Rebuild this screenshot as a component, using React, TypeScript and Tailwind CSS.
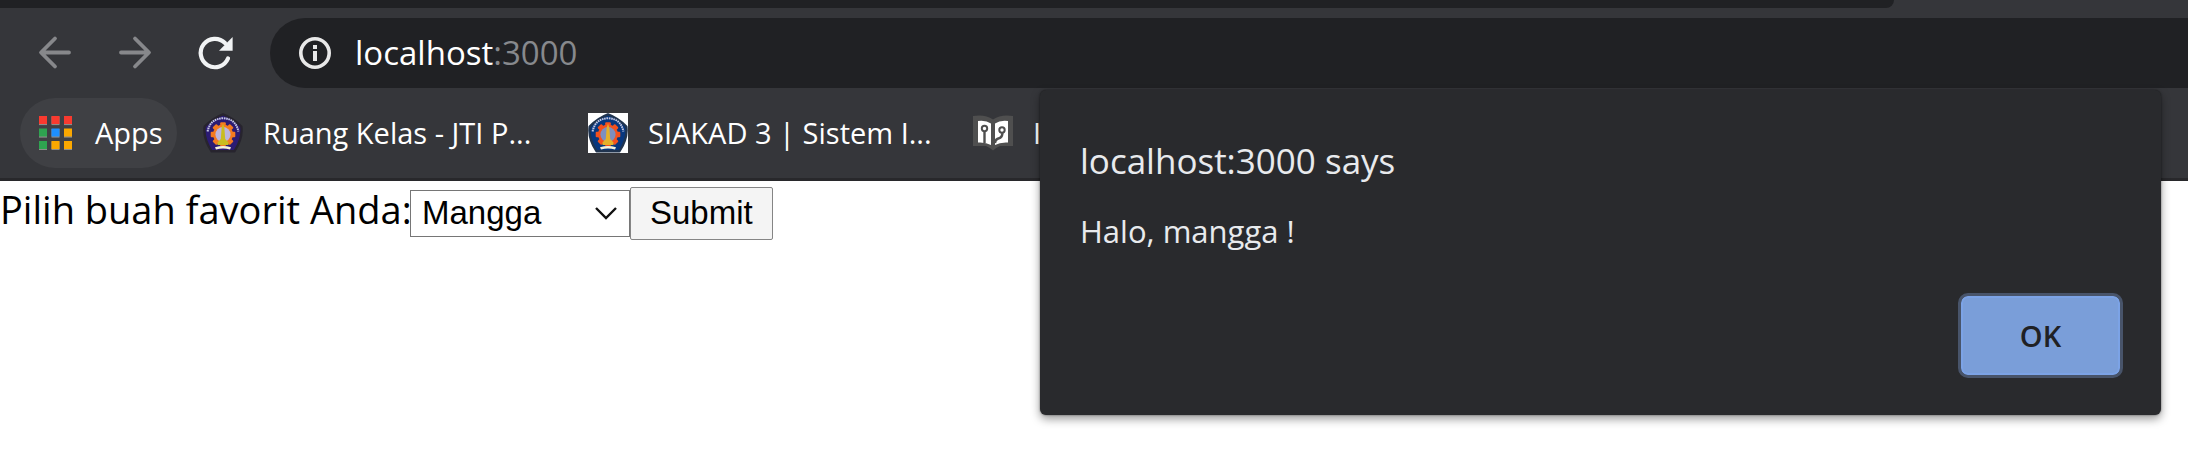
import { useState } from 'react';

const dots = [
  ['#f93a2f', '#f93a2f', '#f93a2f'],
  ['#2ea350', '#1e90ff', '#fba800'],
  ['#2ea350', '#fba800', '#fba800'],
];

function AppsIcon() {
  return (
    <svg width="34" height="34" viewBox="0 0 34 34" aria-hidden="true">
      {dots.map((row, r) =>
        row.map((fill, c) => (
          <g key={`${r}-${c}`}>
            <rect x={c * 12.5} y={r * 12.5 + 0.5} width="8" height="8.6" fill="#8d8d8b" />
            <rect x={c * 12.5} y={r * 12.5} width="8" height="8" fill={fill} />
          </g>
        )),
      )}
    </svg>
  );
}

function ArrowIcon({ flip = false }: { flip?: boolean }) {
  return (
    <svg width="40" height="40" viewBox="0 0 40 40" fill="none" stroke="#87888b" strokeWidth="3.8" strokeLinecap="round" strokeLinejoin="round" aria-hidden="true">
      <path d={flip ? 'M6 19.5H33M20 5.5L34 19.5L20 33.5' : 'M34 19.5H7M20 5.5L6 19.5L20 33.5'} />
    </svg>
  );
}

function ReloadIcon() {
  return (
    <svg width="40" height="40" viewBox="0 0 40 40" aria-hidden="true">
      <path d="M33 25.5A14.2 14.2 0 1 1 30 10" fill="none" stroke="#f1f3f4" strokeWidth="4.2" strokeLinecap="round" />
      <path d="M37.6 4V17.8H24Z" fill="#f1f3f4" />
    </svg>
  );
}

function InfoIcon() {
  return (
    <svg width="32" height="32" viewBox="0 0 32 32" aria-hidden="true">
      <circle cx="16" cy="16" r="14.2" fill="none" stroke="#e8e8e8" strokeWidth="3.6" />
      <path d="M14 8H18V12H14ZM14 14H18V24H14Z" fill="#e8e8e8" />
    </svg>
  );
}

const teeth = [0, 45, 90, 135, 180, 225, 270, 315];

function CrestIcon({ boxed = false }: { boxed?: boolean }) {
  const blue = boxed ? '#07377f' : '#2b1b73';
  const gear = boxed ? '#f4511e' : '#f47a20';
  return (
    <svg width="40" height="40" viewBox="0 0 40 40" aria-hidden="true">
      {boxed && <rect width="40" height="40" fill="#fff" />}
      <path
        d="M20 1.3Q30 5 38.3 13.5Q40 25 31.5 38.2H8.5Q0 25 1.7 13.5Q10 5 20 1.3Z"
        fill={blue}
        stroke={boxed ? '#20344f' : '#27242e'}
        strokeWidth="2.4"
        strokeLinejoin="round"
      />
      <path d="M4.6 18.5Q7 5.8 20 5.2Q33 5.8 35.4 18.5" fill="none" stroke="#c6c9e2" strokeWidth="2" strokeDasharray="1.6 .7" />
      <g fill={gear}>
        {teeth.map((a) => (
          <rect key={a} x="17.2" y="9.2" width="5.6" height="5" rx="1" transform={`rotate(${a} 20 21.5)`} />
        ))}
        <circle cx="20" cy="21.5" r="10" />
      </g>
      <circle cx="20" cy="21.5" r="7.6" fill={boxed ? '#7d8fc0' : '#bcb5dc'} />
      <path d="M20 10.5L21.4 15L22.2 26L25.5 29.5V32H14.5V29.5L17.8 26L18.6 15Z" fill={boxed ? '#e4b12b' : '#c9bd20'} />
      <path d="M12 34.2Q20 31.6 28 34.2L27 36.4Q20 34.4 13 36.4Z" fill="#f6f1da" />
    </svg>
  );
}

function BookIcon() {
  return (
    <svg width="40" height="40" viewBox="0 0 40 40" aria-hidden="true">
      <path d="M0 3Q12 1 20 6.5Q28 1 40 3V33H27Q23 34.5 20 37.5Q17 34.5 13 33H0Z" fill="#4f4f4f" />
      <path d="M5 8Q13 7 18 10.5V32Q13 29 5 29.5Z" fill="#fff" />
      <path d="M35 8Q27 7 22 10.5V32Q27 29 35 29.5Z" fill="#fff" />
      <circle cx="11.5" cy="15.5" r="2.7" fill="#fff" stroke="#4f4f4f" strokeWidth="2" />
      <path d="M11.5 18.5V30" stroke="#4f4f4f" strokeWidth="2.4" />
      <circle cx="29" cy="17" r="2.7" fill="#fff" stroke="#4f4f4f" strokeWidth="2" />
      <path d="M29.5 20Q29 24.5 26 25.3Q22.5 26 22 30" fill="none" stroke="#4f4f4f" strokeWidth="2.4" />
    </svg>
  );
}

export default function App() {
  const [fruit, setFruit] = useState('mangga');
  const [open, setOpen] = useState(true);

  return (
    <div className="relative min-h-screen overflow-hidden bg-white font-['Open_Sans','Noto_Sans',sans-serif]">
      <header className="border-b-3 border-[#28282b] bg-[#35363a] text-white">
        <div className="mr-[294px] h-2 rounded-br-[16px] bg-[#202124]" />
        <div className="flex items-center pt-2.5 pl-[35px]">
          <nav className="flex shrink-0 items-center gap-10" aria-label="Navigation">
            <button type="button" aria-label="Back"><ArrowIcon /></button>
            <button type="button" aria-label="Forward"><ArrowIcon flip /></button>
            <button type="button" aria-label="Reload"><ReloadIcon /></button>
          </nav>
          <div className="ml-[35px] flex h-[70px] min-w-0 flex-1 items-center gap-6 rounded-l-full bg-[#202124] pl-[29px]">
            <InfoIcon />
            <span className="text-[33px] leading-10 whitespace-nowrap">
              localhost<span className="text-[#87898d]">:3000</span>
            </span>
          </div>
        </div>
        <nav className="flex items-center pt-2.5 pb-2.5 pl-5 text-[29px] leading-10 whitespace-nowrap" aria-label="Bookmarks">
          <a href="#apps" className="flex h-[70px] w-[157px] shrink-0 items-center gap-[22px] rounded-full bg-[#3f4044] pl-[19px]">
            <AppsIcon />
            Apps
          </a>
          <a href="#ruang-kelas" className="ml-[26px] flex w-[385px] shrink-0 items-center gap-5">
            <CrestIcon />
            Ruang Kelas - JTI P...
          </a>
          <a href="#siakad" className="flex w-[385px] shrink-0 items-center gap-5">
            <CrestIcon boxed />
            SIAKAD 3 | Sistem I...
          </a>
          <a href="#informatika" className="flex shrink-0 items-center gap-5">
            <BookIcon />
            I
          </a>
        </nav>
      </header>

      <form
        className="flex items-center pt-1.5 text-black"
        onSubmit={(e) => {
          e.preventDefault();
          setOpen(true);
        }}
      >
        <label htmlFor="fruit" className="w-[410px] shrink-0 pb-2 text-[38px] leading-[45px] whitespace-nowrap">
          Pilih buah favorit Anda:
        </label>
        <div className="relative">
          <select
            id="fruit"
            value={fruit}
            onChange={(e) => setFruit(e.target.value)}
            className="block h-[47px] w-[220px] appearance-none border border-[#767676] bg-white pb-0.5 pl-[11px] font-['Liberation_Sans',sans-serif] text-[33px] leading-10"
          >
            <option value="mangga">Mangga</option>
          </select>
          <svg className="pointer-events-none absolute top-4 right-3" width="24" height="16" viewBox="0 0 24 16" fill="none" stroke="#111" strokeWidth="2.4" aria-hidden="true">
            <path d="M2 2L12 12L22 2" />
          </svg>
        </div>
        <button type="submit" className="h-[53px] rounded-xs border border-[#858585] bg-[#f4f4f4] px-[19px] pb-0.5 font-['Liberation_Sans',sans-serif] text-[33px] leading-10">
          Submit
        </button>
      </form>

      {open && (
        <div
          role="dialog"
          aria-labelledby="dialog-title"
          className="absolute top-[90px] right-[27px] flex w-[1121px] flex-col rounded-md bg-[#292a2d] pt-[46px] pr-[38px] pb-[37px] pl-10 text-[#e8eaed] shadow-[0_4px_10px_rgba(0,0,0,0.4),0_0_2px_rgba(0,0,0,0.5)]"
        >
          <h1 id="dialog-title" className="text-[35px] leading-[50px]">localhost:3000 says</h1>
          <p className="pt-[25px] text-[31px] leading-10">Halo, {fruit} !</p>
          <button
            type="button"
            onClick={() => setOpen(false)}
            className="mt-[42px] h-[85px] w-[165px] self-end rounded-[10px] border-3 border-[#48546a] bg-[#7a9ed9] bg-clip-padding text-[29px] leading-10 font-semibold text-[#202124] inset-ring-2 inset-ring-[#7ca3e6]"
          >
            OK
          </button>
        </div>
      )}
    </div>
  );
}
